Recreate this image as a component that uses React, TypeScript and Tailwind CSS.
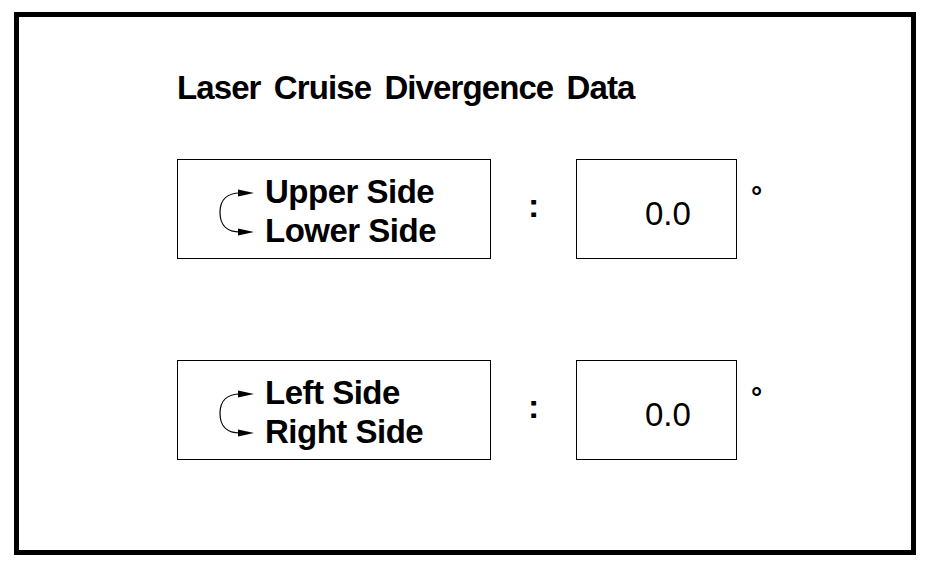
const SwapArrow: React.FC = () => {
  return (
    <svg width="36" height="50" viewBox="0 0 36 50" className="shrink-0">
      <path d="M 21 5 C 9 5, 1 11, 1 24.5 C 1 38, 9 44, 21 44" fill="none" stroke="black" strokeWidth="1.2" />
      <polygon points="19,1.6 35,5 19,8.4" fill="black" />
      <polygon points="19,40.6 35,44 19,47.4" fill="black" />
    </svg>
  );
};

type RowProps = {
  top: string;
  bottom: string;
  value: string;
  className?: string;
};

const DataRow: React.FC<RowProps> = ({ top, bottom, value, className }) => {
  return (
    <div className={"flex items-start " + (className ?? "")}>
      <div className="w-[314px] h-[100px] border border-black flex items-start pl-[41px] pt-[12px]">
        <div className="mt-[16px]">
          <SwapArrow />
        </div>
        <div className="ml-[10px] text-[33px] leading-[39px] font-bold tracking-[-0.5px]">
          <div>{top}</div>
          <div>{bottom}</div>
        </div>
      </div>
      <div className="w-[85px] pl-[37px] pt-[26px] text-[34px] leading-[40px] font-bold">:</div>
      <div className="w-[161px] h-[100px] border border-black pl-[68px] pt-[37px] text-[33px] leading-[33px]">
        {value}
      </div>
      <div className="ml-[14px] mt-[24px] text-[28px] leading-[28px] font-bold">°</div>
    </div>
  );
};

const App: React.FC = () => {
  return (
    <div className="w-[930px] h-[567px] bg-white pt-[12px] pl-[14px] text-black font-['Liberation_Sans',Arial,sans-serif]">
      <div className="w-[902px] h-[543px] border-[5px] border-black">
        <div className="ml-[158px] flex flex-col">
          <div className="mt-[54px] h-[34px] text-[33px] leading-[34px] font-bold tracking-[-0.9px] [word-spacing:5px]">
            Laser Cruise Divergence Data
          </div>
          <DataRow className="mt-[54px]" top="Upper Side" bottom="Lower Side" value="0.0" />
          <DataRow className="mt-[101px]" top="Left Side" bottom="Right Side" value="0.0" />
        </div>
      </div>
    </div>
  );
};

export default App;
